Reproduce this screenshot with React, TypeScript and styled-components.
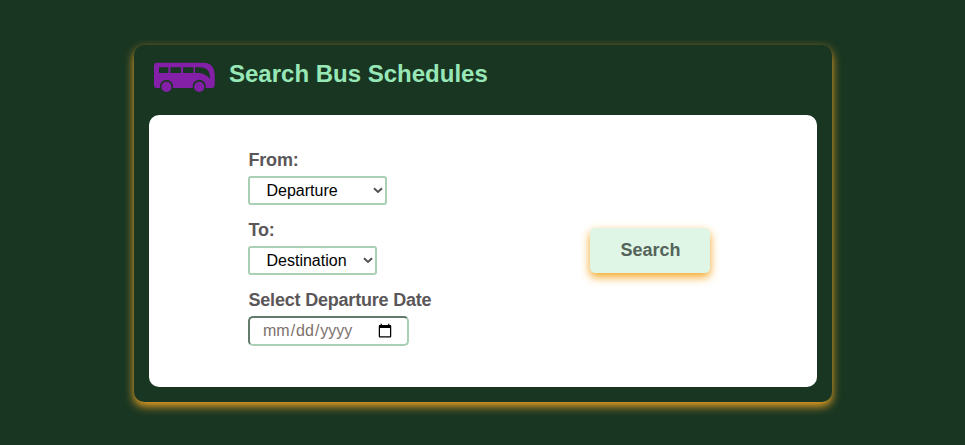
import React from 'react';
import styled, { createGlobalStyle } from 'styled-components';

const GlobalStyle = createGlobalStyle`
  * { box-sizing: border-box; }
  body {
    margin: 0;
    background: #193622;
    font-family: "Liberation Sans", Arial, sans-serif;
  }
`;

const Page = styled.main`
  display: flex;
  justify-content: center;
  height: 445px;
  padding: 45px 0 0 1px;
  overflow: hidden;
`;

const Card = styled.section`
  display: flex;
  flex-direction: column;
  width: 698px;
  height: 357px;
  padding: 0 15px 15px;
  border-radius: 10px;
  background: #193622;
  box-shadow: 0 4px 10px #f5a623;
`;

const Header = styled.header`
  display: flex;
  align-items: flex-start;
  height: 70px;
  padding: 17px 0 0 5px;
`;

const Title = styled.h1`
  margin: -2px 0 0 14px;
  font-size: 24px;
  line-height: 28px;
  color: #98e8b7;
`;

const Panel = styled.form`
  display: flex;
  align-items: flex-start;
  justify-content: space-between;
  height: 272px;
  padding: 35px 107px 0 99px;
  border-radius: 10px;
  background: #fff;
`;

const Fields = styled.div`
  display: flex;
  flex-direction: column;
  gap: 15px;
`;

const Field = styled.div`
  display: flex;
  flex-direction: column;
  align-items: flex-start;
  gap: 5px;
`;

const Label = styled.label`
  padding-left: 0.5px;
  font-size: 18px;
  font-weight: 700;
  line-height: 21px;
  letter-spacing: -0.2px;
  color: #5b5759;
`;

const SelectBox = styled.div<{ $width: number }>`
  position: relative;
  width: ${({ $width }) => $width}px;
  height: 29px;
`;

const Select = styled.select`
  display: block;
  appearance: none;
  width: 100%;
  height: 100%;
  padding: 0 0 0 16.5px;
  border: 2px solid #a9cfb5;
  border-radius: 3px;
  background: #fff;
  color: #000;
  font: 16px "Liberation Sans", Arial, sans-serif;
`;

const Chevron = styled.svg`
  position: absolute;
  top: 11px;
  right: 4px;
  pointer-events: none;
`;

const DateInput = styled.input`
  width: 161px;
  height: 30px;
  padding: 0 13px 0 12px;
  border: 2px inset #a9cfb5;
  border-radius: 5px;
  background: #fff;
  color: #7d716c;
  font: 16px "Liberation Sans", Arial, sans-serif;

  &::-webkit-calendar-picker-indicator {
    position: relative;
    left: 1px;
  }
`;

const SearchButton = styled.button`
  width: 120px;
  height: 45px;
  margin-top: 78px;
  padding: 0 0 1px 1px;
  border: 0;
  border-radius: 5px;
  background: #dff5e5;
  color: #55645b;
  font: 700 18px "Liberation Sans", Arial, sans-serif;
  box-shadow: 0 4px 10px #f5a623;
`;

const BusIcon = () => (
  <svg width="61" height="31" viewBox="0 0 61 31" aria-hidden="true">
    <path
      fill="#8420a8"
      fillRule="evenodd"
      d="M3 .8H49Q60.7 .8 60.7 14V23Q60.7 26 57.5 26H51.6A6.6 6.6 0 1 0 38.8 26H18.9A6.6 6.6 0 1 0 6.1 26H2.8Q0 26 0 23V4Q0 .8 3 .8ZM5 5.2V11H14.4V5.2ZM16.4 5.2V11H27V5.2ZM29.1 5.2V11H39.5V5.2ZM41 5.2V11H45Q51.5 11.3 56 17Q56.5 5.2 46 5.2Z"
    />
    <circle cx="12.5" cy="24.9" r="5.1" fill="#8420a8" />
    <circle cx="45.2" cy="24.9" r="5.1" fill="#8420a8" />
  </svg>
);

const SelectField = ({ id, label, option, width }: { id: string; label: string; option: string; width: number }) => (
  <Field>
    <Label htmlFor={id}>{label}</Label>
    <SelectBox $width={width}>
      <Select id={id}>
        <option>{option}</option>
      </Select>
      <Chevron width="10" height="7" viewBox="0 0 10 7" fill="none" stroke="#505050" strokeWidth="1.9">
        <path d="M1 1.2L5 5L9 1.2" />
      </Chevron>
    </SelectBox>
  </Field>
);

export default function App() {
  return (
    <>
      <GlobalStyle />
      <Page>
        <Card>
          <Header>
            <BusIcon />
            <Title>Search Bus Schedules</Title>
          </Header>
          <Panel onSubmit={(e: React.FormEvent) => e.preventDefault()}>
            <Fields>
              <SelectField id="from" label="From:" option="Departure" width={139} />
              <SelectField id="to" label="To:" option="Destination" width={129} />
              <Field>
                <Label htmlFor="date">Select Departure Date</Label>
                <DateInput id="date" type="date" />
              </Field>
            </Fields>
            <SearchButton type="submit">Search</SearchButton>
          </Panel>
        </Card>
      </Page>
    </>
  );
}
